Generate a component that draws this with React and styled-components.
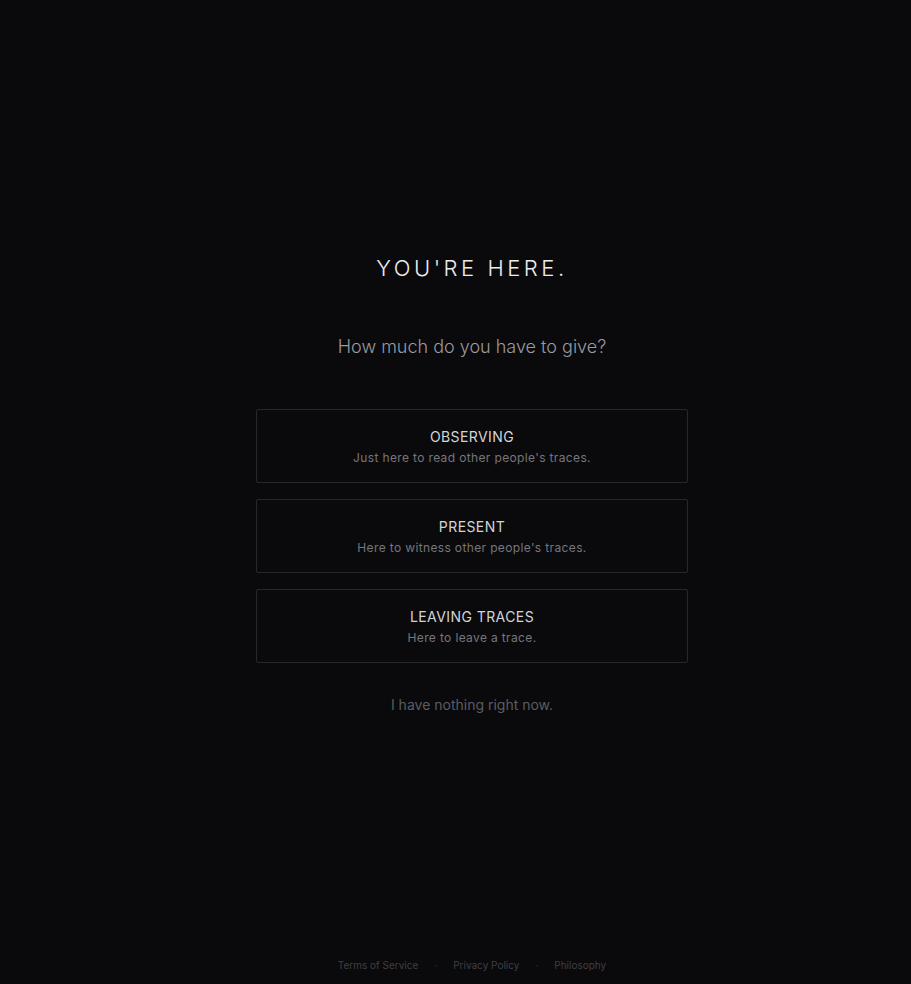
import React from "react";
import styled, { createGlobalStyle } from "styled-components";

const Global = createGlobalStyle`
  html, body { margin: 0; padding: 0; background: #0a0a0c; }
  body { font-family: Inter, "Noto Sans", sans-serif; -webkit-font-smoothing: antialiased; }
  * { box-sizing: border-box; }
`;

const Page = styled.div`
  min-height: 100vh;
  display: flex;
  flex-direction: column;
  padding-left: 33px;
  background: #0a0a0c;
`;

const Main = styled.main`
  flex: 1;
  display: flex;
  flex-direction: column;
  align-items: center;
  justify-content: center;
  padding-top: 12px;
`;

const Title = styled.h1`
  margin: 0;
  font-size: 22px;
  font-weight: 300;
  letter-spacing: 0.16em;
  color: #ececee;
  line-height: 28px;
`;

const Subtitle = styled.p`
  margin: 51px 0 0;
  font-size: 18px;
  font-weight: 300;
  color: #9a9aa0;
  line-height: 28px;
`;

const Options = styled.div`
  margin-top: 48px;
  width: 432px;
  display: flex;
  flex-direction: column;
  gap: 16px;
`;

const Option = styled.button`
  display: flex;
  flex-direction: column;
  align-items: center;
  gap: 4px;
  height: 74px;
  justify-content: center;
  padding: 2px 16px 0;
  background: transparent;
  border: 1px solid #27272b;
  border-radius: 2px;
  cursor: pointer;
  font-family: inherit;
`;

const OptionTitle = styled.span`
  font-size: 14px;
  font-weight: 400;
  letter-spacing: 0.03em;
  color: #d4d4d8;
  line-height: 18px;
`;

const OptionDesc = styled.span`
  font-size: 12px;
  font-weight: 400;
  letter-spacing: 0.03em;
  color: #76767c;
  line-height: 16px;
`;

const Skip = styled.button`
  margin-top: 31px;
  background: none;
  border: none;
  font-family: inherit;
  font-size: 14px;
  color: #5c5c62;
  cursor: pointer;
  line-height: 20px;
`;

const Footer = styled.footer`
  display: flex;
  justify-content: center;
  align-items: center;
  gap: 16px;
  padding: 0 0 12px;
`;

const FooterLink = styled.a`
  font-size: 10px;
  color: #3f3f45;
  text-decoration: none;
  line-height: 14px;
`;

const Dot = styled.span`
  font-size: 10px;
  color: #2e2e33;
`;

const options = [
  { title: "OBSERVING", desc: "Just here to read other people's traces." },
  { title: "PRESENT", desc: "Here to witness other people's traces." },
  { title: "LEAVING TRACES", desc: "Here to leave a trace." },
];

export default function App() {
  return (
    <Page>
      <Global />
      <Main>
        <Title>YOU'RE HERE.</Title>
        <Subtitle>How much do you have to give?</Subtitle>
        <Options>
          {options.map((o) => (
            <Option key={o.title}>
              <OptionTitle>{o.title}</OptionTitle>
              <OptionDesc>{o.desc}</OptionDesc>
            </Option>
          ))}
        </Options>
        <Skip>I have nothing right now.</Skip>
      </Main>
      <Footer>
        <FooterLink href="#">Terms of Service</FooterLink>
        <Dot>·</Dot>
        <FooterLink href="#">Privacy Policy</FooterLink>
        <Dot>·</Dot>
        <FooterLink href="#">Philosophy</FooterLink>
      </Footer>
    </Page>
  );
}
